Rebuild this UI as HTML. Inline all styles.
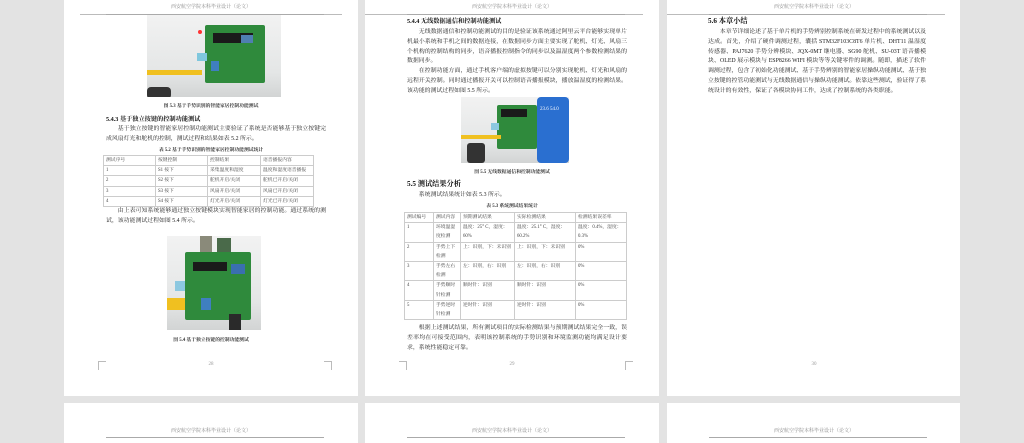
<!DOCTYPE html>
<html><head><meta charset="utf-8">
<style>
*{margin:0;padding:0;box-sizing:border-box}
body{width:1024px;height:437px;background:#e3e3e3;position:relative;overflow:hidden;font-family:"Liberation Serif","Noto Serif CJK SC","Noto Sans CJK SC",serif;color:#222}
.pg{position:absolute;background:#fff;width:294px}
.a{position:absolute;white-space:nowrap}
.hd{position:absolute;left:0;width:294px;text-align:center;font-size:5px;color:#888}
.hl{position:absolute;left:42px;width:218px;height:0;border-top:0.8px solid #aaa}
.cm{position:absolute;width:8px;height:8px;border-color:#bbb;border-style:solid;border-width:0}
.t{position:absolute;font-size:5.9px;line-height:9.8px;text-align:justify;color:#222}
.t p{text-indent:11.8px}
.h{font-weight:bold;font-size:6.2px;color:#111}
.h2{font-weight:bold;font-size:7.2px;color:#111}
.cap{position:absolute;left:0;width:294px;text-align:center;font-size:4.8px;font-weight:bold;color:#333}
table{position:absolute;border-collapse:collapse;font-size:4.8px;color:#444;table-layout:fixed}
td{border:0.5px solid #ccc;padding:0 2px;vertical-align:top;line-height:9.2px;overflow:hidden}
table{border-top:1.2px solid #555;border-bottom:1.2px solid #555}
.pn{position:absolute;left:0;width:294px;text-align:center;font-size:5px;color:#999}
.img{position:absolute;background:linear-gradient(180deg,#f2f2f2,#e4e6e6 70%,#d2d4d4);overflow:hidden}
.brd{position:absolute;background:#2f8a3c;border-radius:2px}
</style></head><body>

<!-- Page 1 -->
<div class="pg" style="left:64px;top:0;height:396px">
 <div class="hd" style="top:3px">西安航空学院本科毕业设计（论文）</div>
 <div class="hl" style="top:14px"></div>
 <div class="cm" style="left:16px;top:14px;border-top-width:1px;width:26px"></div>
 <div class="cm" style="left:260px;top:14px;border-top-width:1px;width:18px"></div>
 <div class="img" style="left:83px;top:15px;width:134px;height:82px">
  <div class="brd" style="left:58px;top:10px;width:60px;height:58px"></div>
  <div class="a" style="left:66px;top:18px;width:40px;height:10px;background:#1a1a1a"></div>
  <div class="a" style="left:94px;top:20px;width:12px;height:8px;background:#4f7fb0"></div>
  <div class="a" style="left:50px;top:38px;width:10px;height:8px;background:#7fc7dd"></div>
  <div class="a" style="left:0;top:55px;width:55px;height:5px;background:#f0c020"></div>
  <div class="a" style="left:64px;top:46px;width:8px;height:10px;background:#3f7fc0"></div>
  <div class="a" style="left:0;top:72px;width:24px;height:12px;background:#333;border-radius:4px"></div>
  <div class="a" style="left:51px;top:15px;width:4px;height:4px;background:#f33;border-radius:50%"></div>
 </div>
 <div class="cap" style="top:102px">图 5.3 基于手势识别的智能家居控制功能测试</div>
 <div class="a h" style="left:42px;top:114px">5.4.3 基于独立按键的控制功能测试</div>
 <div class="t" style="left:42px;top:125px;width:220px"><p>基于独立按键的智能家居控制功能测试主要验证了系统是否能够基于独立按键完成风扇灯光和舵机的控制，测试过程和结果如表 5.2 所示。</p></div>
 <div class="cap" style="top:146px">表 5.2 基于手势识别的智能家居控制功能测试统计</div>
 <table style="left:39px;top:155px;width:211px">
  <tr><td style="width:52px">测试序号</td><td style="width:52px">按键控制</td><td style="width:53px">控制结果</td><td>语音播报内容</td></tr>
  <tr><td>1</td><td>S1 按下</td><td>采集温度和湿度</td><td>温度和湿度语音播报</td></tr>
  <tr><td>2</td><td>S2 按下</td><td>舵机开启/关闭</td><td>舵机已开启/关闭</td></tr>
  <tr><td>3</td><td>S3 按下</td><td>风扇开启/关闭</td><td>风扇已开启/关闭</td></tr>
  <tr><td>4</td><td>S4 按下</td><td>灯光开启/关闭</td><td>灯光已开启/关闭</td></tr>
 </table>
 <div class="t" style="left:42px;top:207px;width:220px"><p>由上表可知系统能够通过独立按键模块实现智能家居的控制功能。通过系统的测试，该功能测试过程如图 5.4 所示。</p></div>
 <div class="img" style="left:103px;top:236px;width:94px;height:94px">
  <div class="brd" style="left:18px;top:16px;width:66px;height:68px"></div>
  <div class="a" style="left:33px;top:0;width:12px;height:16px;background:#8a8a7a"></div>
  <div class="a" style="left:50px;top:2px;width:14px;height:14px;background:#4a6a4a"></div>
  <div class="a" style="left:26px;top:26px;width:34px;height:9px;background:#1a1a1a"></div>
  <div class="a" style="left:64px;top:28px;width:14px;height:10px;background:#3a6fb0"></div>
  <div class="a" style="left:8px;top:45px;width:10px;height:10px;background:#8cc8e0"></div>
  <div class="a" style="left:0;top:62px;width:18px;height:12px;background:#f0c020"></div>
  <div class="a" style="left:34px;top:62px;width:10px;height:12px;background:#3f7fc0"></div>
  <div class="a" style="left:62px;top:78px;width:12px;height:16px;background:#2a2a2a"></div>
 </div>
 <div class="cap" style="top:336px">图 5.4 基于独立按键的控制功能测试</div>
 <div class="cm" style="left:34px;top:361px;border-top-width:1px;border-left-width:1px;height:9px"></div>
 <div class="cm" style="left:260px;top:361px;border-top-width:1px;border-right-width:1px;height:9px"></div>
 <div class="pn" style="top:362px">28</div>
</div>

<!-- Page 2 -->
<div class="pg" style="left:365px;top:0;height:396px">
 <div class="hd" style="top:3px">西安航空学院本科毕业设计（论文）</div>
 <div class="hl" style="top:14px"></div>
 <div class="cm" style="left:0;top:14px;border-top-width:1px;width:42px"></div>
 <div class="cm" style="left:260px;top:14px;border-top-width:1px;width:18px"></div>
 <div class="a h" style="left:42px;top:16px">5.4.4 无线数据通信和控制功能测试</div>
 <div class="t" style="left:42px;top:28px;width:220px"><p>无线数据通信和控制功能测试的目的是验证该系统通过阿里云平台能够实现单片机最小系统和手机之间的数据连接，在数据同步方面主要实现了舵机、灯光、风扇三个机构的控制结构的同步，语音播报控制指令的同步以及温湿度两个参数检测结果的数据同步。</p><p>在控制功能方面，通过手机客户端的虚拟按键可以分别实现舵机、灯光和风扇的远程开关控制。同时通过播报开关可以控制语音播报模块，播放温湿度的检测结果。该功能的测试过程如图 5.5 所示。</p></div>
 <div class="img" style="left:96px;top:97px;width:108px;height:66px">
  <div class="brd" style="left:36px;top:8px;width:40px;height:44px"></div>
  <div class="a" style="left:40px;top:12px;width:26px;height:8px;background:#1a1a1a"></div>
  <div class="a" style="left:76px;top:0;width:32px;height:66px;background:#2a6fd0;border-radius:4px"></div>
  <div class="a" style="left:30px;top:26px;width:8px;height:7px;background:#8cc8e0"></div>
  <div class="a" style="left:0;top:38px;width:40px;height:4px;background:#f0c020"></div>
  <div class="a" style="left:6px;top:46px;width:18px;height:20px;background:#333;border-radius:3px"></div>
  <div class="a" style="left:79px;top:10px;font-size:5px;color:#fff">23.6 54.0</div>
 </div>
 <div class="cap" style="top:168px">图 5.5 无线数据通信和控制功能测试</div>
 <div class="a h2" style="left:42px;top:179px">5.5 测试结果分析</div>
 <div class="t" style="left:42px;top:191px;width:220px"><p>系统测试结果统计如表 5.3 所示。</p></div>
 <div class="cap" style="top:202px">表 5.3 系统测试结果统计</div>
 <table style="left:39px;top:212px;width:223px">
  <tr><td style="width:29px">测试编号</td><td style="width:27px">测试内容</td><td style="width:54px">预期测试结果</td><td style="width:61px">实际检测结果</td><td>检测结果误差率</td></tr>
  <tr><td>1</td><td>环境温湿度检测</td><td>温度：25° C，湿度：60%</td><td>温度：25.1° C，湿度：60.2%</td><td>温度：0.4%，湿度：0.3%</td></tr>
  <tr><td>2</td><td>手势上下检测</td><td>上：识别，下：未识别</td><td>上：识别，下：未识别</td><td>0%</td></tr>
  <tr><td>3</td><td>手势左右检测</td><td>左：识别，右：识别</td><td>左：识别，右：识别</td><td>0%</td></tr>
  <tr><td>4</td><td>手势顺时针检测</td><td>顺时针：识别</td><td>顺时针：识别</td><td>0%</td></tr>
  <tr><td>5</td><td>手势逆时针检测</td><td>逆时针：识别</td><td>逆时针：识别</td><td>0%</td></tr>
 </table>
 <div class="t" style="left:42px;top:324px;width:220px"><p>根据上述测试结果，所有测试项目的实际检测结果与预期测试结果完全一致，误差率均在可接受范围内，表明该控制系统的手势识别和环境监测功能均满足设计要求，系统性能稳定可靠。</p></div>
 <div class="cm" style="left:34px;top:361px;border-top-width:1px;border-right-width:1px;height:9px"></div>
 <div class="cm" style="left:260px;top:361px;border-top-width:1px;border-left-width:1px;height:9px"></div>
 <div class="pn" style="top:362px">29</div>
</div>

<!-- Page 3 -->
<div class="pg" style="left:667px;top:0;height:396px;width:293px">
 <div class="hd" style="top:3px">西安航空学院本科毕业设计（论文）</div>
 <div class="hl" style="top:14px"></div>
 <div class="cm" style="left:0;top:14px;border-top-width:1px;width:42px"></div>
 <div class="cm" style="left:260px;top:14px;border-top-width:1px;width:18px"></div>
 <div class="a h2" style="left:41px;top:16px">5.6 本章小结</div>
 <div class="t" style="left:41px;top:28px;width:218px"><p>本章节详细论述了基于单片机的手势辨别控制系统在研发过程中的系统测试以及达成。首先，介绍了硬件调测过程，囊括 STM32F103C8T6 单片机、DHT11 温湿度传感器、PAJ7620 手势分辨模块、JQX-0MT 继电器、SG90 舵机、SU-03T 语音播模块、OLED 展示模块与 ESP8266 WIFI 模块等等关键零件的调测。随即，描述了软件调测过程，包含了初始化功能测试、基于手势辨别的智能家居操纵功能测试、基于独立按键的控管功能测试与无线数据通信与操纵功能测试。依靠这些测试，验证得了系统设计的有效性，保证了各模块协同工作，达成了控制系统的各类职能。</p></div>
 <div class="pn" style="top:362px">30</div>
</div>

<!-- bottom pages -->
<div class="pg" style="left:64px;top:403px;height:40px">
 <div class="hd" style="top:24px">西安航空学院本科毕业设计（论文）</div>
 <div class="hl" style="top:34px"></div>
</div>
<div class="pg" style="left:365px;top:403px;height:40px">
 <div class="hd" style="top:24px">西安航空学院本科毕业设计（论文）</div>
 <div class="hl" style="top:34px"></div>
</div>
<div class="pg" style="left:667px;top:403px;height:40px;width:293px">
 <div class="hd" style="top:24px">西安航空学院本科毕业设计（论文）</div>
 <div class="hl" style="top:34px"></div>
</div>
</body></html>
